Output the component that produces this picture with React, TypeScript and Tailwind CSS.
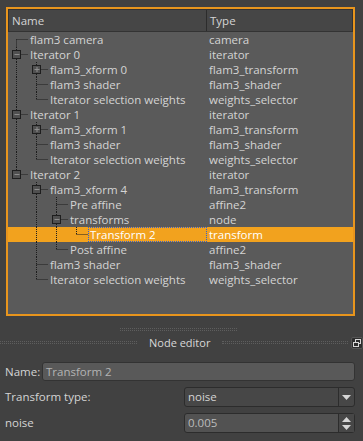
import React from 'react';

type TreeNode = {
  name: string;
  type: string;
  expanded?: boolean;
  selected?: boolean;
  children?: TreeNode[];
};

type FlatRow = {
  node: TreeNode;
  level: number;
  isLast: boolean;
  isFirst: boolean;
  ancestorsLast: boolean[];
};

const tree: TreeNode[] = [
  { name: 'flam3 camera', type: 'camera' },
  {
    name: 'Iterator 0',
    type: 'iterator',
    expanded: true,
    children: [
      { name: 'flam3_xform 0', type: 'flam3_transform', children: [{ name: '', type: '' }] },
      { name: 'flam3 shader', type: 'flam3_shader' },
      { name: 'Iterator selection weights', type: 'weights_selector' },
    ],
  },
  {
    name: 'Iterator 1',
    type: 'iterator',
    expanded: true,
    children: [
      { name: 'flam3_xform 1', type: 'flam3_transform', children: [{ name: '', type: '' }] },
      { name: 'flam3 shader', type: 'flam3_shader' },
      { name: 'Iterator selection weights', type: 'weights_selector' },
    ],
  },
  {
    name: 'Iterator 2',
    type: 'iterator',
    expanded: true,
    children: [
      {
        name: 'flam3_xform 4',
        type: 'flam3_transform',
        expanded: true,
        children: [
          { name: 'Pre affine', type: 'affine2' },
          {
            name: 'transforms',
            type: 'node',
            expanded: true,
            children: [{ name: 'Transform 2', type: 'transform', selected: true }],
          },
          { name: 'Post affine', type: 'affine2' },
        ],
      },
      { name: 'flam3 shader', type: 'flam3_shader' },
      { name: 'Iterator selection weights', type: 'weights_selector' },
    ],
  },
];

function flatten(nodes: TreeNode[], level: number, ancestorsLast: boolean[], out: FlatRow[]) {
  nodes.forEach((node, i) => {
    const isLast = i === nodes.length - 1;
    out.push({ node, level, isLast, isFirst: level === 0 && i === 0, ancestorsLast });
    if (node.expanded && node.children) {
      flatten(node.children, level + 1, [...ancestorsLast, isLast], out);
    }
  });
  return out;
}

const rows = flatten(tree, 0, [], []);

// dotted connector lines + expand box, Qt style
function Branches({ row }: { row: FlatRow }) {
  const { level, isLast, isFirst, ancestorsLast, node } = row;
  const w = 20 * (level + 1);
  const cx = 8.5 + 20 * level;
  const dot = { stroke: '#1c1c1c', strokeWidth: 1, strokeDasharray: '1 1' };
  const hasChildren = !!node.children;
  return (
    <svg width={w} height={15} className="shrink-0">
      {ancestorsLast.map((last, k) =>
        last ? null : <line key={k} x1={8.5 + 20 * k} y1={0} x2={8.5 + 20 * k} y2={15} {...dot} />
      )}
      <line x1={cx} y1={isFirst ? 7.5 : 0} x2={cx} y2={isLast ? 7.5 : 15} {...dot} />
      <line x1={cx} y1={7.5} x2={cx + 12} y2={7.5} {...dot} />
      {hasChildren && (
        <g>
          <rect x={cx - 4} y={3.5} width={8} height={8} fill="#505050" stroke="#1e1e1e" />
          <line x1={cx - 2} y1={7.5} x2={cx + 3} y2={7.5} stroke="#8c8c8c" />
          {!node.expanded && <line x1={cx + 0.5} y1={5} x2={cx + 0.5} y2={10} stroke="#8c8c8c" />}
        </g>
      )}
    </svg>
  );
}

function TreeRow({ row }: { row: FlatRow }) {
  const sel = row.node.selected;
  return (
    <div className={`flex h-[15px] items-center leading-[13px] ${sel ? 'bg-[#f2a21e] text-white' : ''}`}>
      <div className="flex h-full w-[199px] shrink-0 items-center">
        <Branches row={row} />
        <div
          className={`flex h-full flex-1 items-center whitespace-nowrap ${
            sel ? 'border border-dotted border-[#2f5fd0] pl-[1px]' : 'pl-[2px]'
          }`}
        >
          {row.node.name}
        </div>
      </div>
      <div className="pl-[2px] whitespace-nowrap">{row.node.type}</div>
    </div>
  );
}

function FloatIcon() {
  return (
    <svg width={12} height={12} viewBox="0 0 12 12" className="shrink-0">
      <rect x={0.5} y={0.5} width={11} height={11} rx={1.5} fill="#2e2e2e" stroke="#555" />
      <rect x={4.5} y={2.5} width={5} height={4} fill="none" stroke="#d8d8d8" />
      <rect x={2.5} y={5.5} width={5} height={4} fill="#2e2e2e" stroke="#d8d8d8" />
    </svg>
  );
}

function Arrow({ up }: { up?: boolean }) {
  return (
    <svg width={9} height={5} viewBox="0 0 9 5">
      <polygon points={up ? '0,5 9,5 4.5,0' : '0,0 9,0 4.5,5'} fill="#d6d6d6" />
    </svg>
  );
}

export default function App() {
  return (
    <div className="flex h-[441px] w-[363px] flex-col bg-[#414141] font-['Open_Sans',sans-serif] text-[11.5px] leading-[14px] text-[#d4d4d4]">
      {/* scene tree */}
      <div className="pl-[6px] pr-[8px] pt-[7px]">
        <div className="flex h-[309px] flex-col border-2 border-[#e8951d] bg-[#5a5a5a]">
          <div className="flex h-[23px] shrink-0 items-center border border-[#333] bg-[#464646]">
            <div className="flex h-full w-[198px] items-center border-r border-[#2c2c2c] pl-[3px]">Name</div>
            <div className="pl-[3px]">Type</div>
          </div>
          {rows.map((row, i) => (
            <TreeRow key={i} row={row} />
          ))}
        </div>
      </div>

      {/* splitter grip */}
      <div className="mt-[12px] flex h-[3px] pl-[120px]">
        <div className="h-[3px] w-[117px] border-y border-dotted border-[#5e5e5e]" />
      </div>

      {/* dock title */}
      <div className="mt-[5px] flex h-[13px] items-center">
        <div className="h-[3px] w-[137px] border-y border-dotted border-[#5e5e5e]" />
        <div className="px-[12px] text-[11px] leading-[13px] text-[#d8d8d8]">Node editor</div>
        <div className="h-[3px] flex-1 border-y border-dotted border-[#5e5e5e]" />
        <div className="pl-[3px]">
          <FloatIcon />
        </div>
      </div>

      {/* node editor form */}
      <div className="flex flex-col pl-[5px] pr-[8px] pt-[13px]">
        <div className="flex h-[19px] items-center">
          <div className="w-[37px]">Name:</div>
          <div className="flex h-full flex-1 items-center rounded-[3px] border border-[#333] bg-[#595959] pl-[3px] text-[#b4b4b4]">
            Transform 2
          </div>
        </div>
        <div className="mt-[6px] flex h-[20px] items-center">
          <div className="w-[179px]">Transform type:</div>
          <div className="flex h-full flex-1 items-center rounded-[3px] border border-[#2c2c2c] bg-[#474747]">
            <div className="flex-1 pl-[3px]">noise</div>
            <div className="flex h-full w-[16px] items-center justify-center border-l border-[#2c2c2c]">
              <Arrow />
            </div>
          </div>
        </div>
        <div className="mt-[6px] flex h-[20px] items-center">
          <div className="w-[179px]">noise</div>
          <div className="flex h-full flex-1 items-center rounded-[3px] border border-[#2c2c2c] bg-[#525252]">
            <div className="flex-1 pl-[3px] text-[#bcbcbc]">0.005</div>
            <div className="flex h-full w-[16px] flex-col items-center justify-center gap-[3px] border-l border-[#2c2c2c] bg-[#474747]">
              <Arrow up />
              <Arrow />
            </div>
          </div>
        </div>
      </div>
    </div>
  );
}
